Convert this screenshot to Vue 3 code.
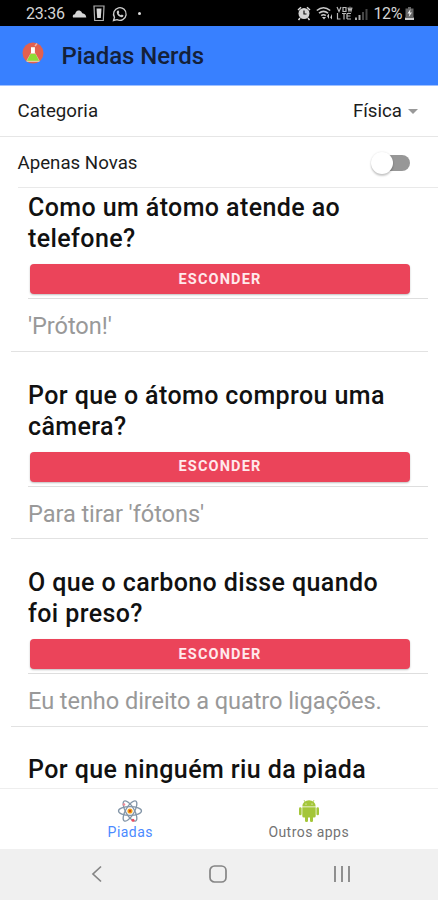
<template>
  <div class="app">
    <div class="status-bar">
      <span class="status-time">23:36</span>
      <svg class="ic-cloud" width="15" height="10" viewBox="0 0 15 10">
        <path d="M1 8.5Q0 5.500 3 5.300Q4 .8 7.500 1.500Q9.500 2 10.300 4.200Q13.800 4.500 14.300 8.500Z" fill="#d6d6d6" />
      </svg>
      <svg class="ic-card" width="12" height="17" viewBox="0 0 12 17">
        <path d="M1 1H11L10.300 15.500H1.700Z" fill="none" stroke="#b0b0b0" stroke-width="1.200" />
        <path d="M3.500 3.500H8.500L7.800 13H4.200Z" fill="#d8d8d8" />
      </svg>
      <svg class="ic-chat" width="16" height="16" viewBox="0 0 16 16">
        <path d="M1.500 14.500L2.500 11.300A6.300 6.300 0 1 1 5 13.600Z" fill="none" stroke="#cfcfcf" stroke-width="1.300" />
        <path d="M5.300 4.700L6.600 4.500L7.300 6.300L6.600 7.200Q7.300 8.700 8.900 9.300L9.900 8.500L11.500 9.400Q11.400 11.300 9.500 11.200Q5 10.300 4.700 6Z" fill="#cfcfcf" />
      </svg>
      <span class="dot"></span>
      <div class="status-right">
        <svg width="14" height="15" viewBox="0 0 14 15">
          <path d="M1 4L4 1.200M13 4L10 1.200M3 12L1.500 14M11 12L12.500 14" stroke="#ddd" stroke-width="1.500" />
          <circle cx="7" cy="7.500" r="5.500" fill="#d5d5d5" />
          <path d="M7 4.500V8H9.500" fill="none" stroke="#111" stroke-width="1.200" />
        </svg>
        <svg width="18" height="15" viewBox="0 0 18 15">
          <path d="M.8 4.500Q7.500-1 14.200 4.500M3 7.200Q7.500 3.500 12 7.200M5.200 9.700Q7.500 7.800 9.800 9.700" fill="none" stroke="#c9c9c9" stroke-width="1.600" />
          <path d="M6 11L8 13.500L10 11ZM11 10L13 7.500V13M16 8V13.500L14.200 11.500" fill="#ccc" />
        </svg>
        <svg width="17" height="15" viewBox="0 0 17 15">
          <path d="M1 1L3 5.500L5 1M7 1.500H10V5.500H7ZM12 1.500L13 5L14 2L15 5L16 1.500M1.500 7V13H4.500M6 7.500H10M8 7.500V13.500M11 7.500H15M11 10H14.500M11 13H15M11 7.500V13" fill="none" stroke="#b9b9b9" stroke-width="1.200" />
        </svg>
        <svg width="13" height="15" viewBox="0 0 13 15">
          <path d="M0 11.500H2V14H0ZM3.500 9H5.500V14H3.500Z" fill="#aaa" />
          <path d="M7 6H9V14H7ZM10.500 3H12.500V14H10.500Z" fill="#464646" />
        </svg>
        <span class="battery-level">12%</span>
        <svg width="11" height="15" viewBox="0 0 11 15">
          <path d="M4 1H7V2.500H9.500V11H1.500V2.500H4Z" fill="#666" />
          <path d="M1 11.500H10V14H1Z" fill="#ccc" />
          <path d="M6.500 3L3.500 7.500H5.500L4.800 11L8 6.500H6Z" fill="#eee" />
        </svg>
      </div>
    </div>

    <header class="toolbar">
      <svg class="logo" width="22" height="22" viewBox="0 0 22 22">
        <circle cx="11" cy="11" r="10.500" fill="#e2604f" />
        <path d="M9 5H13V10.500L17.500 18.500Q18 20 16.500 20H5.500Q4 20 4.500 18.500L9 10.500Z" fill="#e9c5a5" />
        <path d="M9 5.500H12.800V11H9Z" fill="#fff" />
        <path d="M8.500 12H13.500L17 18.800H5Z" fill="#8edb35" />
        <path d="M13 4L15 1.500" stroke="#edb4a8" stroke-width="1.500" />
      </svg>
      <h1>Piadas Nerds</h1>
    </header>

    <div class="filters">
      <div class="row category">
        <label>Categoria</label>
        <div class="select">
          {{ categoria }}
          <span class="caret"></span>
        </div>
      </div>
      <div class="row only-new">
        <label>Apenas Novas</label>
        <button class="toggle" :class="{ on: apenasNovas }" @click="apenasNovas = !apenasNovas">
          <span class="knob"></span>
        </button>
      </div>
    </div>

    <main class="content">
      <div v-for="(piada, i) in piadas" :key="i" class="joke">
        <div class="question">
          <h2>{{ piada.pergunta }}</h2>
          <button v-if="piada.resposta" class="hide-btn" @click="piada.aberta = !piada.aberta">
            {{ piada.aberta ? 'ESCONDER' : 'MOSTRAR' }}
          </button>
        </div>
        <p v-if="piada.aberta" class="answer">{{ piada.resposta }}</p>
      </div>
    </main>

    <nav class="tabs">
      <div class="tab active">
        <svg width="26" height="24" viewBox="0 0 26 24">
          <g fill="none" stroke="#8496a8" stroke-width="1.300">
            <ellipse cx="13" cy="12" rx="11.500" ry="4.300" />
            <ellipse cx="13" cy="12" rx="11.500" ry="4.300" transform="rotate(60 13 12)" />
            <ellipse cx="13" cy="12" rx="11.500" ry="4.300" transform="rotate(120 13 12)" />
          </g>
          <circle cx="13" cy="12" r="2.600" fill="#f5a31c" />
          <circle cx="13" cy="12" r="1.200" fill="#d9480f" />
          <circle cx="7" cy="5.500" r="1.300" fill="#f08a96" />
          <circle cx="16" cy="21.200" r="1.500" fill="#ed4a5c" />
        </svg>
        <span>Piadas</span>
      </div>
      <div class="tab">
        <svg width="22" height="24" viewBox="0 0 22 24">
          <g fill="#a4c639">
            <path d="M4.300 7.500A6.700 6.200 0 0 1 17.700 7.500Z" />
            <path d="M4.300 8.300H17.700V17Q17.700 18.500 16.200 18.500H5.800Q4.300 18.500 4.300 17Z" />
            <rect x="1" y="8.300" width="2.600" height="8" rx="1.300" />
            <rect x="18.400" y="8.300" width="2.600" height="8" rx="1.300" />
            <rect x="7" y="17" width="3" height="6" rx="1.300" />
            <rect x="12" y="17" width="3" height="6" rx="1.300" />
          </g>
          <path d="M7 3L6 1M15 3L16 1" stroke="#a4c639" stroke-width=".7" />
          <circle cx="8" cy="5" r=".6" fill="#fff" />
          <circle cx="14" cy="5" r=".6" fill="#fff" />
        </svg>
        <span>Outros apps</span>
      </div>
    </nav>

    <div class="nav-bar">
      <svg width="12" height="18" viewBox="0 0 12 18">
        <path d="M10 1.500L2 9L10 16.500" fill="none" stroke="#858585" stroke-width="1.700" />
      </svg>
      <svg width="20" height="20" viewBox="0 0 20 20">
        <rect x="2" y="2" width="16" height="16" rx="4.500" fill="none" stroke="#858585" stroke-width="1.700" />
      </svg>
      <svg width="18" height="18" viewBox="0 0 18 18">
        <path d="M2 1V17M9 1V17M16 1V17" stroke="#858585" stroke-width="1.800" />
      </svg>
    </div>
  </div>
</template>

<script setup>
import { ref } from 'vue'

const categoria = ref('Física')
const apenasNovas = ref(false)

const piadas = ref([
  { pergunta: 'Como um átomo atende ao telefone?', resposta: "'Próton!'", aberta: true },
  { pergunta: 'Por que o átomo comprou uma câmera?', resposta: "Para tirar 'fótons'", aberta: true },
  { pergunta: 'O que o carbono disse quando foi preso?', resposta: 'Eu tenho direito a quatro ligações.', aberta: true },
  { pergunta: 'Por que ninguém riu da piada', resposta: '', aberta: false }
])
</script>

<style>
body {
  margin: 0;
  background: #fff;
}
</style>

<style scoped>
.app {
  width: 438px;
  height: 900px;
  display: flex;
  flex-direction: column;
  overflow: hidden;
  background: #fff;
  color: #111;
  font-family: Roboto, "Liberation Sans", sans-serif;
}

svg {
  display: block;
  flex: none;
}

button {
  border: none;
  padding: 0;
  font-family: inherit;
  cursor: pointer;
}

.status-bar {
  flex: none;
  box-sizing: border-box;
  height: 26px;
  padding: 1px 23px 0 26px;
  display: flex;
  align-items: center;
  background: #000;
  color: #d4d4d4;
  font-size: 16px;
}

.status-time {
  width: 40px;
  letter-spacing: -0.2px;
}

.ic-cloud {
  margin-left: 6px;
}

.ic-card {
  margin-left: 6px;
}

.ic-chat {
  margin-left: 7px;
}

.dot {
  width: 3px;
  height: 3px;
  margin-left: 10px;
  border-radius: 50%;
  background: #ddd;
}

.status-right {
  margin-left: auto;
  display: flex;
  align-items: center;
  gap: 2px;
}

.status-right svg:first-child {
  margin-right: 3px;
}

.battery-level {
  margin-left: 3px;
  letter-spacing: -0.4px;
}

.toolbar {
  flex: none;
  box-sizing: border-box;
  height: 60px;
  padding: 0 22px;
  display: flex;
  align-items: center;
  gap: 17.5px;
  background: #3880ff;
  border-bottom: 1px solid #9fc0ff;
}

.logo {
  margin-bottom: 6px;
}

.toolbar h1 {
  margin: 0;
  font-size: 24px;
  font-weight: 500;
  letter-spacing: -0.05px;
  color: #14213a;
}

.row {
  box-sizing: border-box;
  display: flex;
  align-items: center;
  justify-content: space-between;
  font-size: 18.7px;
  color: #1c1c1c;
}

.category {
  height: 51px;
  padding: 0 20px 0 17.5px;
  border-bottom: 1px solid #e6e6e6;
}

.only-new {
  height: 51px;
  margin-left: 17.5px;
  padding: 2px 28px 0 0;
  border-bottom: 1px solid #e9e9e9;
}

.select {
  display: flex;
  align-items: center;
  gap: 6px;
}

.caret {
  border: 5px solid transparent;
  border-top-color: #999;
  border-bottom: 0;
}

.toggle {
  position: relative;
  width: 36px;
  height: 16px;
  border-radius: 8px;
  background: #979797;
}

.knob {
  position: absolute;
  left: -3px;
  top: -3px;
  width: 22px;
  height: 22px;
  border-radius: 50%;
  background: #fff;
  box-shadow: 0 2px 2px rgba(0, 0, 0, 0.2), 0 0 2px rgba(0, 0, 0, 0.12);
}

.toggle.on .knob {
  left: 17px;
}

.content {
  flex: 1;
  min-height: 0;
  overflow: hidden;
}

.joke {
  box-sizing: border-box;
  height: 187.5px;
  margin: 0 10px 0 11px;
  padding-top: 28px;
  border-bottom: 1px solid #e2e2e2;
}

.joke:first-child {
  height: 163.5px;
  padding-top: 4px;
}

.question {
  box-sizing: border-box;
  height: 107px;
  margin-left: 17px;
  border-bottom: 1px solid #dedede;
}

.question h2 {
  height: 62px;
  margin: 0 20px 10px 0;
  font-size: 25px;
  font-weight: 500;
  line-height: 31px;
  letter-spacing: 0.4px;
}

.joke:last-child {
  padding-top: 27px;
}

.joke:last-child h2 {
  white-space: nowrap;
}

.hide-btn {
  display: block;
  width: 380px;
  height: 30px;
  margin-left: 2px;
  border-radius: 4px;
  background: #eb445a;
  color: #ffe9ec;
  font-size: 14.5px;
  font-weight: 700;
  letter-spacing: 1.15px;
  box-shadow: 0 1px 2px rgba(0, 0, 0, 0.25);
}

.answer {
  margin: 0 0 0 17px;
  font-size: 23.6px;
  line-height: 54px;
  letter-spacing: -0.08px;
  color: #999;
}

.tabs {
  flex: none;
  box-sizing: border-box;
  height: 61px;
  padding: 0 40px 0 41px;
  display: flex;
  border-top: 1px solid #eee;
  background: #fff;
}

.tab {
  flex: 1;
  display: flex;
  flex-direction: column;
  align-items: center;
  padding-top: 10px;
  font-size: 14px;
  line-height: 18px;
  letter-spacing: 0.45px;
  color: #737373;
}

.tab.active {
  color: #4b8aff;
}

.nav-bar {
  flex: none;
  box-sizing: border-box;
  height: 51px;
  padding: 0 87px 2px 91px;
  display: flex;
  align-items: center;
  justify-content: space-between;
  background: #f0f0f0;
}
</style>
